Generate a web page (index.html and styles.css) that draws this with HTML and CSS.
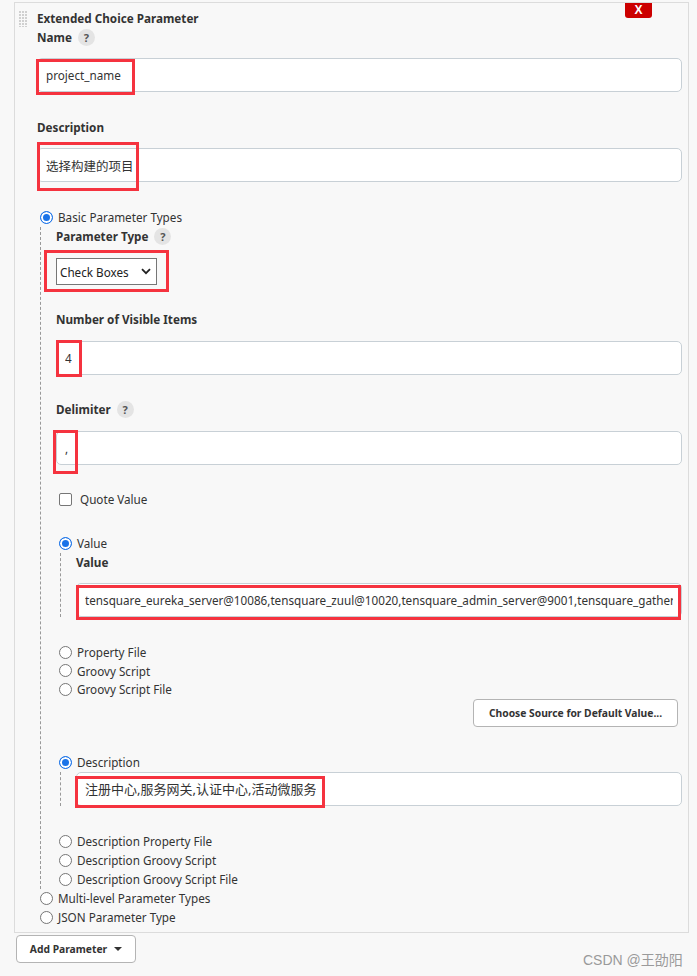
FILE: index.html
```html
<!DOCTYPE html>
<html lang="zh">
<head>
<meta charset="utf-8">
<title>Extended Choice Parameter</title>
<link rel="stylesheet" href="styles.css">
</head>
<body>
<div class="page">
  <div class="panel">
    <span class="handle"></span>
    <span class="del">X</span>
    <div class="title">Extended Choice Parameter</div>
    <div class="label">Name <span class="help">?</span></div>
    <div class="field f11"><span class="val">project_name</span></div>
    <div class="label gap26">Description</div>
    <div class="field f11"><span class="val cjk">选择构建的项目</span></div>

    <div class="radio-row gap26"><span class="radio on"></span>Basic Parameter Types</div>
    <div class="nest">
      <div class="label">Parameter Type <span class="help">?</span></div>
      <div class="select">Check Boxes
        <svg class="chev" width="10" height="7" viewBox="0 0 10 7"><path d="M1 1.2 L5 5.2 L9 1.2" fill="none" stroke="#222" stroke-width="1.8"/></svg>
      </div>
      <div class="label gap25">Number of Visible Items</div>
      <div class="field f12"><span class="val">4</span></div>
      <div class="label gap25">Delimiter <span class="help">?</span></div>
      <div class="field f12"><span class="val">,</span></div>
      <div class="check-row gap25"><span class="checkbox"></span>Quote Value</div>

      <div class="radio-row gap25"><span class="radio on"></span>Value</div>
      <div class="nest inner">
        <div class="label">Value</div>
        <div class="field f11"><span class="val">tensquare_eureka_server@10086,tensquare_zuul@10020,tensquare_admin_server@9001,tensquare_gathering@9002</span></div>
      </div>
      <div class="radio-list gap26">
        <div class="radio-row tight"><span class="radio"></span>Property File</div>
        <div class="radio-row tight"><span class="radio"></span>Groovy Script</div>
        <div class="radio-row tight"><span class="radio"></span>Groovy Script File</div>
      </div>
      <div class="btn-row"><span class="btn choose">Choose Source for Default Value...</span></div>

      <div class="radio-row gap26"><span class="radio on"></span>Description</div>
      <div class="nest inner">
        <div class="field f0"><span class="val cjk13">注册中心,服务网关,认证中心,活动微服务</span></div>
      </div>
      <div class="radio-list gap26">
        <div class="radio-row"><span class="radio"></span>Description Property File</div>
        <div class="radio-row"><span class="radio"></span>Description Groovy Script</div>
        <div class="radio-row"><span class="radio"></span>Description Groovy Script File</div>
      </div>
    </div>
    <div class="radio-row"><span class="radio"></span>Multi-level Parameter Types</div>
    <div class="radio-row"><span class="radio"></span>JSON Parameter Type</div>
  </div>
  <div class="add-row"><span class="btn add">Add Parameter <span class="caret"></span></span></div>

  <span class="mark m-name"></span>
  <span class="mark m-desc"></span>
  <span class="mark m-select"></span>
  <span class="mark m-num"></span>
  <span class="mark m-delim"></span>
  <span class="mark m-value"></span>
  <span class="mark m-dval"></span>
  <span class="watermark">CSDN @王劭阳</span>
</div>
</body>
</html>
```

FILE: styles.css
```css
* { box-sizing: border-box; }
html, body { margin: 0; padding: 0; background: #f8f8f8; }
body {
  font-family: "Noto Sans", "Noto Sans CJK SC", sans-serif;
  font-size: 11.7px;
  color: #333;
}
.page {
  position: relative;
  width: 697px;
  height: 976px;
  padding: 2px 8px 0 14px;
}
.panel {
  position: relative;
  border: 1px solid #dcdcdc;
  background: #f8f8f8;
  padding: 6px 6px 5px 22px;
}
.handle {
  position: absolute;
  left: 4px;
  top: 7px;
  width: 9px;
  height: 17px;
  background-image:
    linear-gradient(90deg, transparent 2px, #f8f8f8 2px),
    linear-gradient(0deg, transparent 2px, #f8f8f8 2px);
  background-color: #d0d0d0;
  background-size: 3px 3px, 3px 3px;
}
.del {
  position: absolute;
  right: 36px;
  top: 0;
  width: 27px;
  height: 15px;
  background: #cc0000;
  color: #fff;
  font-family: "Liberation Sans", sans-serif;
  font-weight: bold;
  font-size: 12px;
  line-height: 15px;
  text-align: center;
  border-radius: 0 0 3px 3px;
}
.title, .label {
  font-weight: bold;
  line-height: 19px;
  height: 19px;
  color: #333;
  display: flex;
  align-items: center;
}
.help {
  display: inline-flex;
  align-items: center;
  justify-content: center;
  width: 17px;
  height: 17px;
  margin-left: 6px;
  border-radius: 50%;
  background: #e4e4e4;
  color: #555;
  font-size: 11px;
  font-weight: bold;
}
.gap26 { margin-top: 26px; }
.gap25 { margin-top: 25px; }
.field {
  height: 34px;
  background: #fff;
  border: 1px solid #c8d0d6;
  border-radius: 5px;
  padding: 0 8px;
  display: flex;
  align-items: center;
}
.f0 { margin-top: 0; }
.f11 { margin-top: 11px; }
.f12 { margin-top: 12px; }
.val {
  display: block;
  white-space: nowrap;
  overflow: hidden;
  color: #333;
}
.val.cjk { font-size: 12.5px; }
.val.cjk13 { font-size: 13px; }
.radio-row, .check-row {
  display: flex;
  align-items: center;
  line-height: 19px;
  height: 19px;
}
.radio-row.tight { height: 18.5px; line-height: 18.5px; }
.radio {
  width: 13px;
  height: 13px;
  margin: 0 5px 0 3px;
  border-radius: 50%;
  border: 1px solid #767676;
  background: #fff;
  flex: none;
}
.radio.on {
  border: 1px solid #1a73e8;
  background: #1a73e8;
  box-shadow: inset 0 0 0 2px #fff;
}
.checkbox {
  width: 13px;
  height: 13px;
  margin: 0 8px 0 3px;
  border: 1px solid #767676;
  border-radius: 2px;
  background: #fff;
  flex: none;
}
.nest {
  margin-left: 3px;
  border-left: 1px dashed #999;
  padding-left: 15px;
}
.nest.inner {
  margin-left: 4px;
  padding-left: 15px;
}
.select {
  margin-top: 12px;
  width: 101px;
  height: 27px;
  border: 1px solid #767676;
  background: #fff;
  display: flex;
  align-items: center;
  justify-content: space-between;
  padding: 0 5px 0 3px;
  color: #222;
}
.btn-row {
  display: flex;
  justify-content: flex-end;
  padding-right: 4px;
}
.btn {
  display: inline-flex;
  align-items: center;
  justify-content: center;
  height: 28px;
  background: #fff;
  border: 1px solid #b4b4b4;
  border-radius: 4px;
  font-weight: bold;
  font-size: 10.3px;
  color: #333;
}
.btn.choose { width: 205px; }
.add-row { margin-top: 2px; padding-left: 2px; }
.btn.add { width: 120px; }
.caret {
  display: inline-block;
  margin-left: 7px;
  border-left: 4px solid transparent;
  border-right: 4px solid transparent;
  border-top: 4px solid #333;
}
.mark {
  position: absolute;
  border: 3px solid #f5333f;
}
.m-name { left: 36px; top: 59px; width: 99px; height: 36px; }
.m-desc { left: 37px; top: 142px; width: 102px; height: 49px; }
.m-select { left: 44px; top: 250px; width: 125px; height: 42px; }
.m-num { left: 56px; top: 340px; width: 26px; height: 37px; }
.m-delim { left: 53px; top: 430px; width: 25px; height: 44px; }
.m-value { left: 76px; top: 585px; width: 605px; height: 35px; }
.m-dval { left: 75px; top: 776px; width: 250px; height: 32px; }
.watermark {
  position: absolute;
  left: 583px;
  top: 949px;
  font-size: 14px;
  color: #9a9a9a;
  font-family: "Liberation Sans", "Noto Sans CJK SC", sans-serif;
}
```
